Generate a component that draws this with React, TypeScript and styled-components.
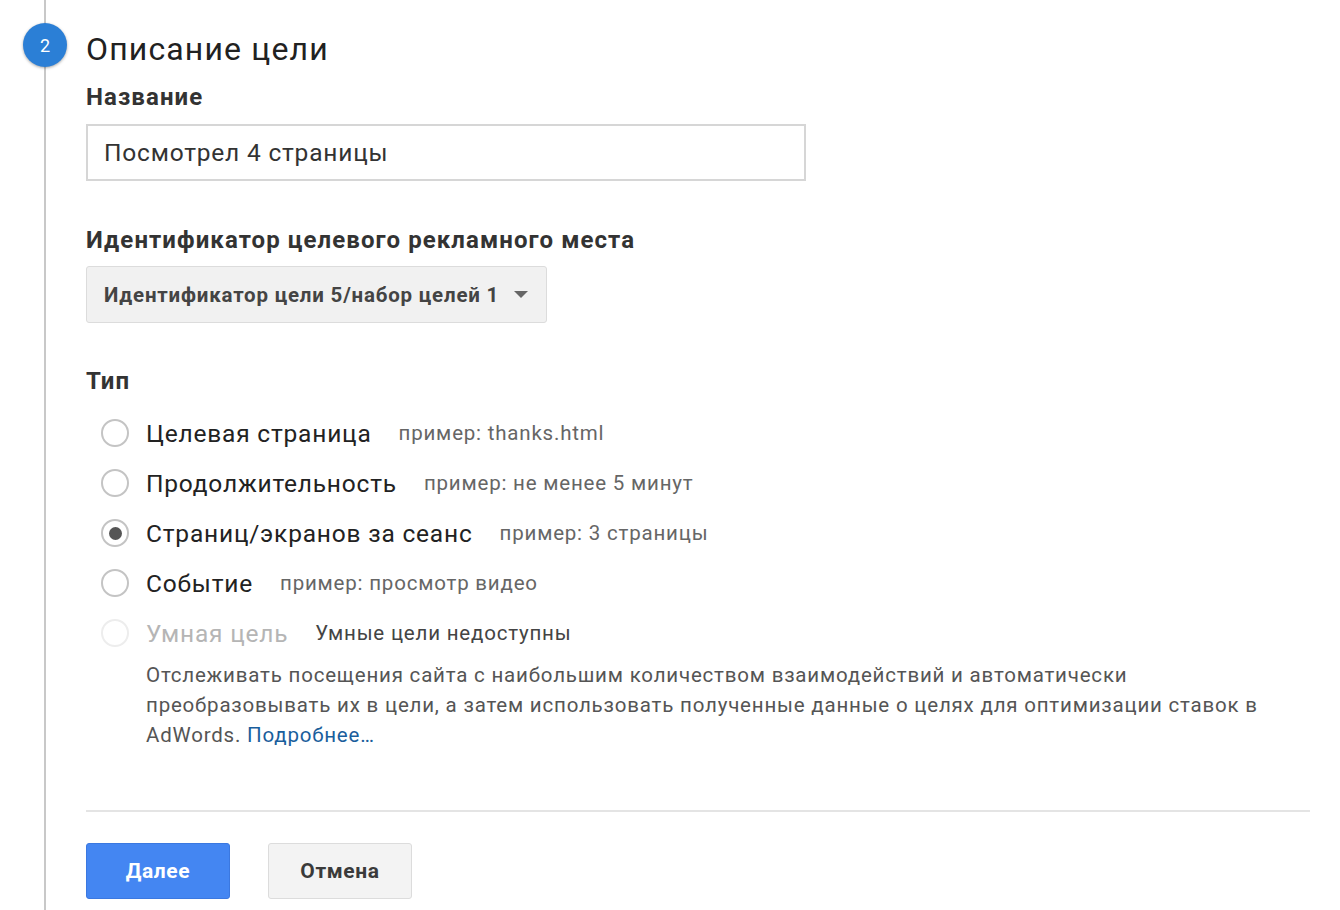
import styled, { createGlobalStyle } from "styled-components";

const GlobalStyle = createGlobalStyle`
  html, body {
    margin: 0;
    padding: 0;
    background: #fff;
  }
  body {
    font-family: Roboto, "Noto Sans", Arial, sans-serif;
    letter-spacing: 0.05em;
    color: #212121;
  }
`;

const Page = styled.div`
  display: flex;
  width: 1340px;
  min-height: 910px;
`;

const Rail = styled.div`
  width: 86px;
  flex-shrink: 0;
  display: flex;
  justify-content: center;
  background: linear-gradient(#c8c8c8, #c8c8c8) no-repeat 44px 0 / 2px 100%;
`;

const StepBadge = styled.div`
  width: 44px;
  height: 44px;
  margin-top: 23px;
  margin-left: 4px;
  border-radius: 50%;
  background: #2b7fd6;
  box-shadow: 0 1px 3px rgba(0, 0, 0, 0.35);
  color: #fff;
  font-size: 18px;
  letter-spacing: 0;
  display: flex;
  align-items: center;
  justify-content: center;
`;

const Content = styled.div`
  flex: 1;
  padding: 29px 30px 0 0;
  display: flex;
  flex-direction: column;
`;

const Title = styled.h1`
  margin: 0;
  font-size: 32px;
  font-weight: 400;
  letter-spacing: 0.036em;
  line-height: 40px;
  color: #212121;
`;

const Label = styled.div<{ $top: number }>`
  margin-top: ${(p) => p.$top}px;
  font-size: 24px;
  font-weight: 700;
  letter-spacing: 0.045em;
  line-height: 30px;
  color: #333;
`;

const TextInput = styled.div`
  margin-top: 12px;
  width: 720px;
  height: 57px;
  box-sizing: border-box;
  border: 2px solid #d6d6d6;
  padding: 0 16px;
  display: flex;
  align-items: center;
  font-size: 24.5px;
  color: #333;
`;

const Select = styled.div`
  margin-top: 11px;
  width: 461px;
  height: 57px;
  box-sizing: border-box;
  border: 1.5px solid #dcdcdc;
  border-radius: 3px;
  background: #f1f1f1;
  padding: 0 16px 0 17px;
  display: flex;
  align-items: center;
  justify-content: space-between;
  font-size: 20.5px;
  font-weight: 700;
  color: #444;
`;

const Caret = styled.span`
  width: 0;
  height: 0;
  border-left: 7px solid transparent;
  border-right: 7px solid transparent;
  border-top: 7px solid #666;
  margin-right: 2px;
`;

const RadioList = styled.div`
  margin-top: 12px;
  padding-left: 15px;
  display: flex;
  flex-direction: column;
`;

const RadioRow = styled.div`
  height: 50px;
  display: flex;
  align-items: center;
`;

const Circle = styled.span<{ $checked?: boolean; $disabled?: boolean }>`
  width: 28px;
  height: 28px;
  box-sizing: border-box;
  border-radius: 50%;
  border: 2px solid ${(p) => (p.$disabled ? "#ededed" : "#c4c4c4")};
  display: flex;
  align-items: center;
  justify-content: center;
  margin-right: 17px;
  &::after {
    content: "";
    display: ${(p) => (p.$checked ? "block" : "none")};
    width: 13px;
    height: 13px;
    border-radius: 50%;
    background: #555;
  }
`;

const OptionText = styled.span<{ $disabled?: boolean }>`
  font-size: 24.5px;
  color: ${(p) => (p.$disabled ? "#b5b5b5" : "#222")};
  margin-right: 27px;
`;

const Example = styled.span<{ $dark?: boolean }>`
  font-size: 20.5px;
  color: ${(p) => (p.$dark ? "#444" : "#666")};
`;

const Description = styled.p`
  margin: 2px 0 0 60px;
  max-width: 1140px;
  font-size: 20.5px;
  line-height: 30px;
  color: #555;
`;

const MoreLink = styled.a`
  color: #1a5e9c;
  text-decoration: none;
`;

const Divider = styled.hr`
  margin: 60px 0 0 0;
  border: none;
  border-top: 2px solid #e4e4e4;
  width: 1224px;
`;

const Actions = styled.div`
  margin-top: 31px;
  display: flex;
  gap: 38px;
`;

const Button = styled.button<{ $primary?: boolean }>`
  width: 144px;
  height: 56px;
  border-radius: 3px;
  box-sizing: border-box;
  font-family: inherit;
  font-size: 21px;
  font-weight: 700;
  letter-spacing: 0.03em;
  cursor: pointer;
  border: 1.5px solid ${(p) => (p.$primary ? "#3b78e0" : "#dcdcdc")};
  background: ${(p) => (p.$primary ? "#4486f2" : "#f3f3f3")};
  color: ${(p) => (p.$primary ? "#fff" : "#3a3a3a")};
`;

const options = [
  { label: "Целевая страница", example: "пример: thanks.html" },
  { label: "Продолжительность", example: "пример: не менее 5 минут" },
  { label: "Страниц/экранов за сеанс", example: "пример: 3 страницы", checked: true },
  { label: "Событие", example: "пример: просмотр видео" },
];

export default function App() {
  return (
    <>
      <GlobalStyle />
      <Page>
        <Rail>
          <StepBadge>2</StepBadge>
        </Rail>
        <Content>
          <Title>Описание цели</Title>
          <Label $top={13}>Название</Label>
          <TextInput>Посмотрел 4 страницы</TextInput>
          <Label $top={44}>Идентификатор целевого рекламного места</Label>
          <Select>
            <span>Идентификатор цели 5/набор целей 1</span>
            <Caret />
          </Select>
          <Label $top={43}>Тип</Label>
          <RadioList>
            {options.map((o) => (
              <RadioRow key={o.label}>
                <Circle $checked={o.checked} />
                <OptionText>{o.label}</OptionText>
                <Example>{o.example}</Example>
              </RadioRow>
            ))}
            <RadioRow>
              <Circle $disabled />
              <OptionText $disabled>Умная цель</OptionText>
              <Example $dark>Умные цели недоступны</Example>
            </RadioRow>
          </RadioList>
          <Description>
            Отслеживать посещения сайта с наибольшим количеством взаимодействий и автоматически
            преобразовывать их в цели, а затем использовать полученные данные о целях для оптимизации ставок в
            AdWords. <MoreLink href="#">Подробнее…</MoreLink>
          </Description>
          <Divider />
          <Actions>
            <Button $primary>Далее</Button>
            <Button>Отмена</Button>
          </Actions>
        </Content>
      </Page>
    </>
  );
}
